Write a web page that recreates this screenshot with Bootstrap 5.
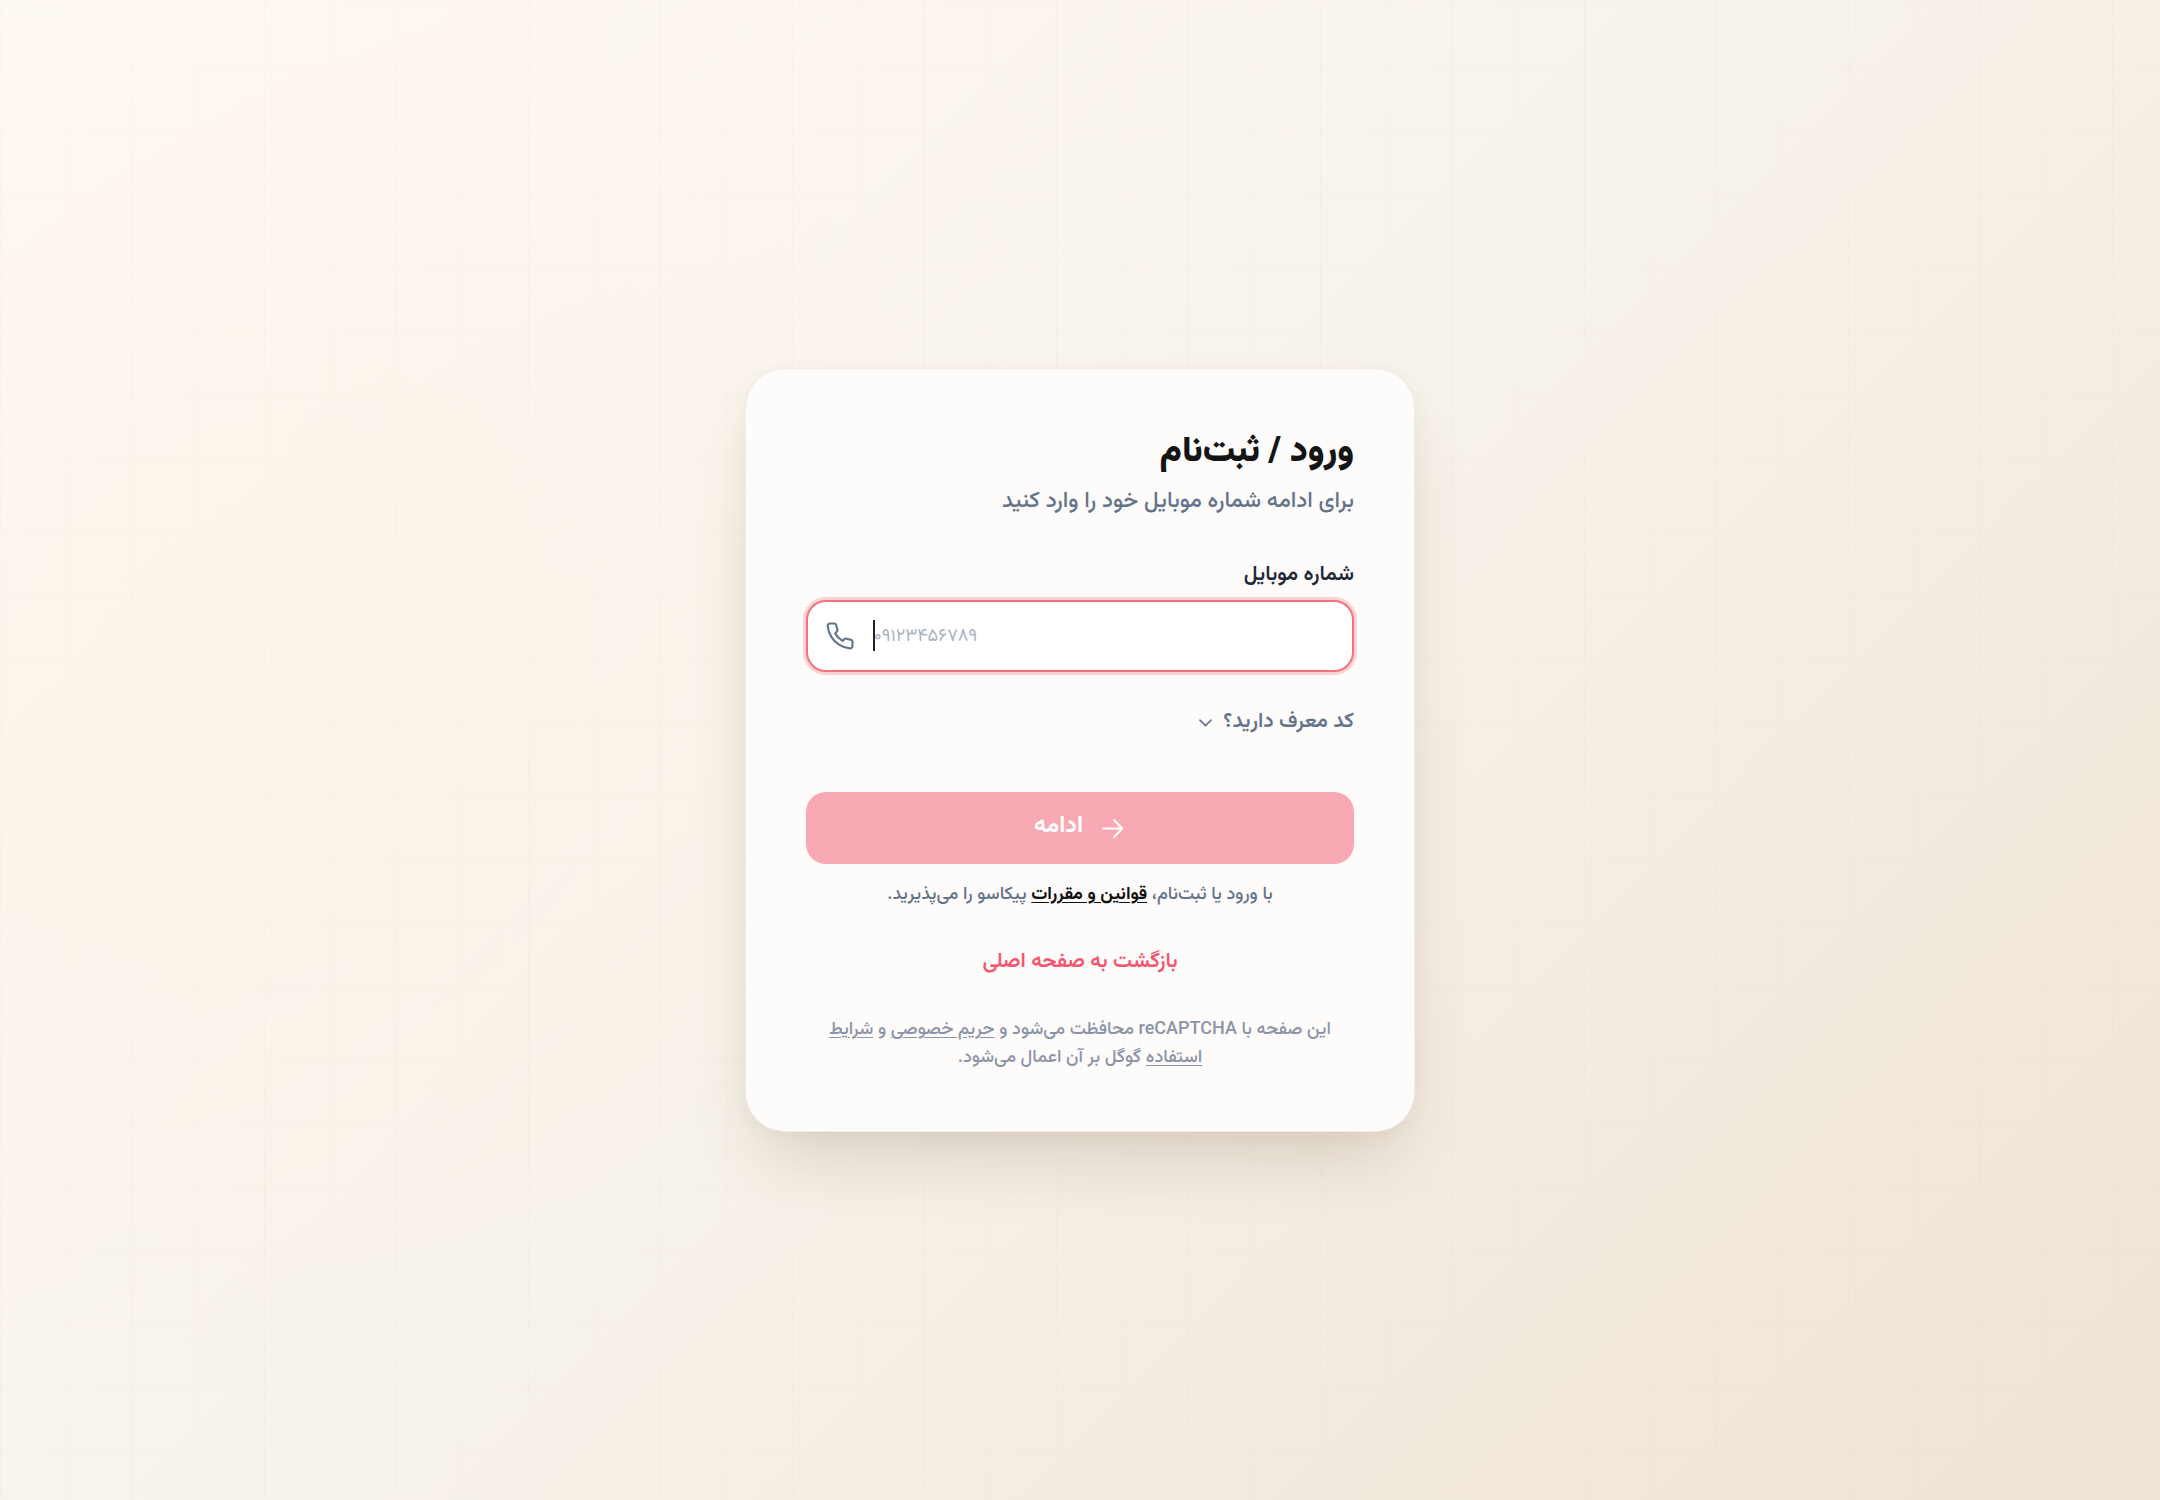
<!DOCTYPE html>
<html lang="fa" dir="rtl">
<head>
<meta charset="utf-8">
<title>ورود / ثبت‌نام</title>
<link href="https://cdn.jsdelivr.net/npm/bootstrap@5.3.0/dist/css/bootstrap.min.css" rel="stylesheet">
<style>
html,body{height:100%}
body{font-family:"Vazirmatn","Noto Sans Arabic","Noto Sans","DejaVu Sans",sans-serif;
  background-color:#f7f2ea;
  background-image:linear-gradient(rgba(130,100,60,.024) 1px,transparent 1px),linear-gradient(90deg,rgba(130,100,60,.024) 1px,transparent 1px),radial-gradient(circle at 12% 45%,rgba(255,240,225,.35) 0,rgba(255,240,225,0) 36%),linear-gradient(135deg,#fff9f3 0%,#f7f2ea 50%,#efe3d4 100%);
  background-size:66px 66px,66px 66px,100% 100%,100% 100%;}
.auth-shell{height:1500px}
.auth-card{width:670px;height:764px;padding:59px 60px 0;border-radius:40px;background:#fefcfa;border:1px solid rgba(120,100,70,.1);box-shadow:0 40px 70px -18px rgba(90,70,40,.2),0 4px 20px rgba(90,70,40,.04)}
.auth-title{font-size:35.5px;font-weight:900;color:#141414;line-height:50px;margin:0}
.auth-sub{font-size:22.4px;font-weight:500;color:#64748b;line-height:34px;margin:7px 0 0}
.auth-label{font-size:21px;font-weight:600;color:#1e293b;line-height:30px;margin:41px 0 10px;display:block}
.phone-wrap{height:72px}
.phone-input.form-control{height:72px;border-radius:20px;border:2px solid #f4707f;box-shadow:0 0 0 3px rgba(244,100,120,.28);background:#fff;padding:0 66px;font-size:18.2px;text-align:left}
.phone-input::placeholder{color:#aab2bf}
.phone-icon{left:19px;top:21px;width:30px;height:30px}
.fake-caret{left:67px;top:20px;width:1.5px;height:31px;background:#222}
.ref-toggle{font-size:21px;font-weight:600;color:#64748b;line-height:32px;margin-top:34px}
.go-btn.btn{height:72px;margin-top:54px;border-radius:20px;background:#f9a9b4;border:0;color:#fff;font-size:23.5px;font-weight:700}
.go-label{padding-bottom:2px}
.terms-note{font-size:18px;font-weight:500;color:#64748b;line-height:28px;margin-top:17px}
.terms-note a{color:#111;font-weight:700;text-underline-offset:3px}
.back-home{font-size:21px;font-weight:600;color:#f5556e;line-height:32px;margin-top:37px;text-decoration:none;display:block}
.recap-note{font-size:18px;font-weight:500;color:#8b94a8;line-height:28px;margin-top:38px}
.recap-note a{color:#8b94a8;text-underline-offset:3px}
</style>
</head>
<body>
<main class="auth-shell d-flex align-items-center justify-content-center">
  <section class="auth-card">
    <h1 class="auth-title">ورود / ثبت‌نام</h1>
    <p class="auth-sub">برای ادامه شماره موبایل خود را وارد کنید</p>
    <label class="auth-label" for="phone">شماره موبایل</label>
    <div class="phone-wrap position-relative">
      <input id="phone" class="phone-input form-control" dir="ltr" placeholder="۰۹۱۲۳۴۵۶۷۸۹">
      <svg class="phone-icon position-absolute" viewBox="0 0 24 24" fill="none" stroke="#64748b" stroke-width="1.700" stroke-linecap="round" stroke-linejoin="round"><path d="M22 16.920v3a2 2 0 0 1-2.180 2 19.790 19.790 0 0 1-8.630-3.070 19.500 19.500 0 0 1-6-6 19.790 19.790 0 0 1-3.070-8.670A2 2 0 0 1 4.110 2h3a2 2 0 0 1 2 1.720 12.840 12.840 0 0 0 .7 2.810 2 2 0 0 1-.45 2.110L8.090 9.910a16 16 0 0 0 6 6l1.270-1.270a2 2 0 0 1 2.110-.45 12.840 12.840 0 0 0 2.810.7A2 2 0 0 1 22 16.920z"/></svg>
      <span class="fake-caret position-absolute"></span>
    </div>
    <div class="ref-toggle d-flex align-items-center gap-2">
      <span>کد معرف دارید؟</span>
      <svg width="19" height="19" viewBox="0 0 24 24" fill="none" stroke="#64748b" stroke-width="2" stroke-linecap="round" stroke-linejoin="round"><path d="M5 9l7 7 7-7"/></svg>
    </div>
    <button class="go-btn btn w-100 d-flex align-items-center justify-content-center gap-3" type="button">
      <svg width="27" height="27" viewBox="0 0 24 24" fill="none" stroke="#fff" stroke-width="1.900" stroke-linecap="round" stroke-linejoin="round"><path d="M3.500 12h17M13.500 4.500l7 7.500-7 7.500"/></svg>
      <span class="go-label">ادامه</span>
    </button>
    <p class="terms-note text-center mb-0">با ورود یا ثبت‌نام، <a href="#">قوانین و مقررات</a> پیکاسو را می‌پذیرید.</p>
    <a class="back-home text-center" href="#">بازگشت به صفحه اصلی</a>
    <p class="recap-note text-center mb-0">این صفحه با reCAPTCHA محافظت می‌شود و <a href="#">حریم خصوصی</a> و <a href="#">شرایط استفاده</a> گوگل بر آن اعمال می‌شود.</p>
  </section>
</main>
<script src="https://cdn.jsdelivr.net/npm/bootstrap@5.3.0/dist/js/bootstrap.bundle.min.js"></script>
</body>
</html>
